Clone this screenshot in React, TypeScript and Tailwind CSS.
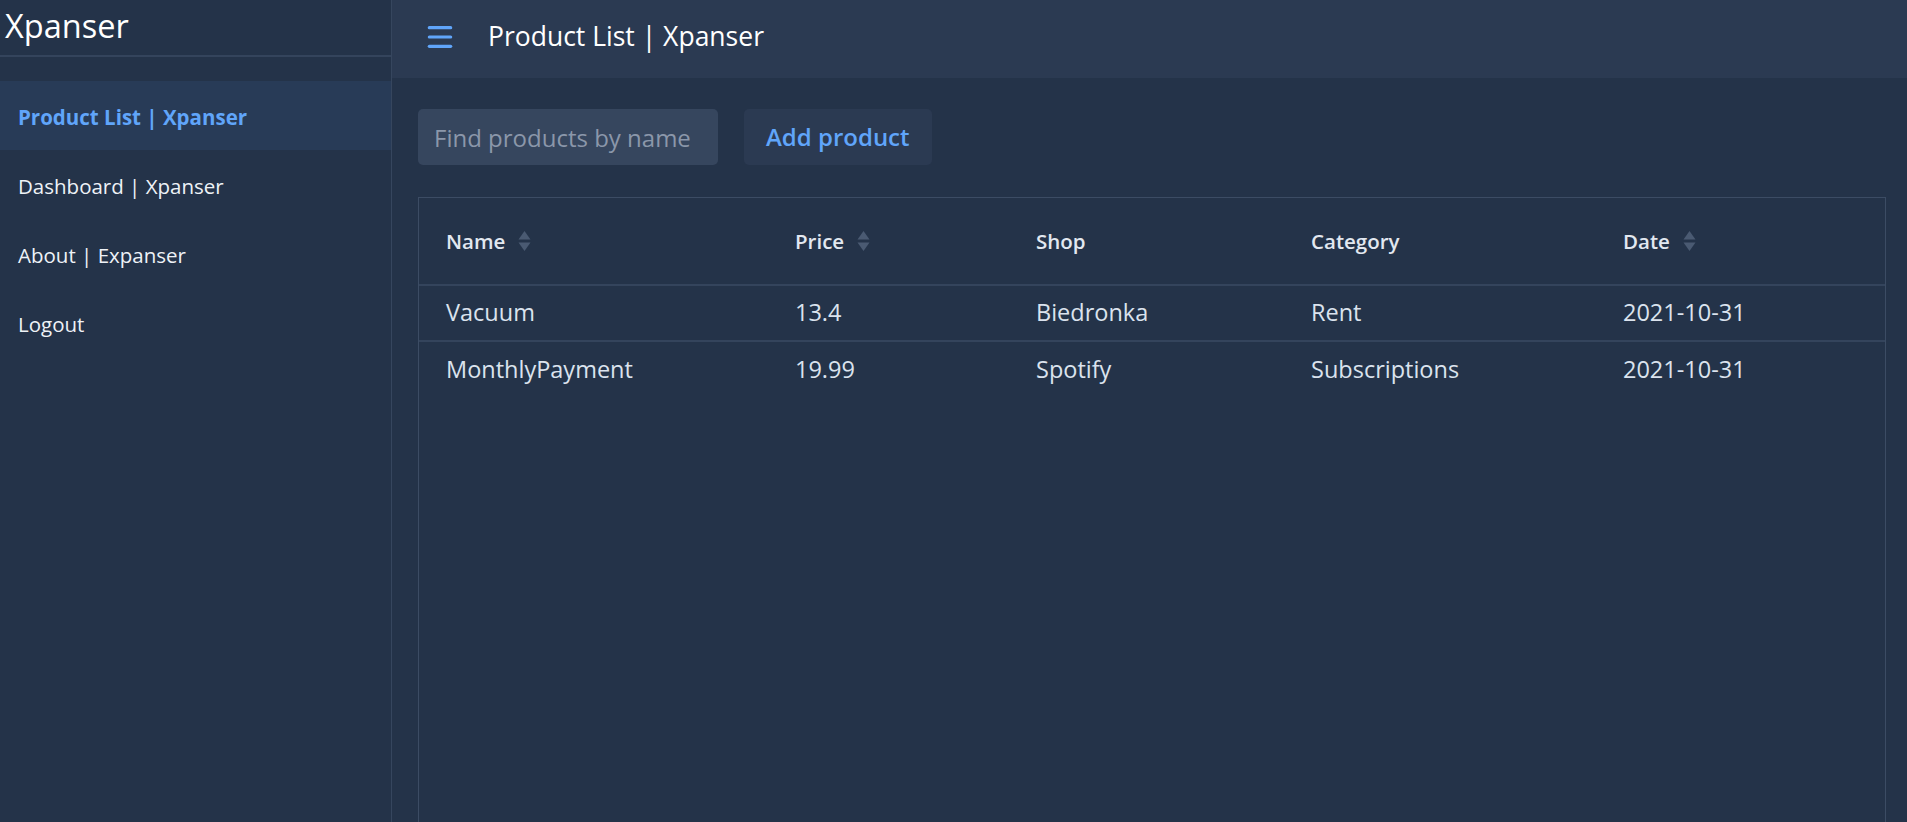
import { Menu } from 'lucide-react';

const rows = [
    { name: 'Vacuum', price: '13.4', shop: 'Biedronka', category: 'Rent', date: '2021-10-31' },
    { name: 'MonthlyPayment', price: '19.99', shop: 'Spotify', category: 'Subscriptions', date: '2021-10-31' },
];

const SortIcon = () => (
    <svg width="15" height="22" viewBox="0 0 15 22" className="ml-3 shrink-0">
        <path d="M7.5 1 L13.5 9.5 H1.5 Z" fill="#4a5a72" />
        <path d="M7.5 21 L13.5 12.5 H1.5 Z" fill="#4a5a72" />
    </svg>
);

const navItems = ['Product List | Xpanser', 'Dashboard | Xpanser', 'About | Expanser', 'Logout'];

export default function App() {
    return (
        <div className="flex h-[822px] w-full overflow-hidden bg-[#243349] text-[#e2e8f0]" style={{ fontFamily: '"Open Sans", "Noto Sans", sans-serif' }}>
            <aside className="w-[392px] shrink-0 border-r border-[#36465e] flex flex-col">
                <div className="h-[57px] border-b-2 border-[#34445c] pl-[5px] flex items-start">
                    <span className="text-[32.5px] leading-[52px] text-white">Xpanser</span>
                </div>
                <nav className="pt-[24px] flex flex-col">
                    {navItems.map((item, i) => (
                        <div
                            key={item}
                            className={
                                'h-[69px] flex items-center pl-[18px] pt-[3px] text-[20.5px] ' +
                                (i === 0 ? 'bg-[#283b57] text-[#60a5fa] font-bold' : 'text-[#eef2f7] font-medium')
                            }
                        >
                            {item}
                        </div>
                    ))}
                </nav>
            </aside>
            <main className="flex-1 flex flex-col min-w-0">
                <header className="h-[78px] shrink-0 bg-[#2b3a52] flex items-center pl-[32px] pb-[5px]">
                    <Menu className="w-[32px] h-[32px] text-[#60a5fa]" strokeWidth={2.4} />
                    <h1 className="ml-[32px] text-[26.5px] font-medium text-white">Product List | Xpanser</h1>
                </header>
                <div className="flex-1 flex flex-col pl-[26px] pr-[21px] pt-[31px]">
                    <div className="flex items-center gap-[26px]">
                        <input
                            placeholder="Find products by name"
                            className="w-[300px] h-[56px] rounded-[5px] bg-[#36465e] px-[16px] text-[24px] text-white placeholder:text-[#8b97aa] outline-none"
                        />
                        <button className="h-[56px] px-[22px] rounded-[5px] bg-[#2b3a52] text-[24px] font-semibold text-[#60a5fa]">
                            Add product
                        </button>
                    </div>
                    <div className="mt-[32px] flex-1 border border-[#3c4c64] border-b-0">
                        <table className="w-full table-fixed border-collapse text-left">
                            <colgroup>
                                <col className="w-[376px]" />
                                <col className="w-[241px]" />
                                <col className="w-[275px]" />
                                <col className="w-[312px]" />
                                <col />
                            </colgroup>
                            <thead>
                                <tr className="h-[87px] border-b-2 border-[#34445c]">
                                    <th className="pl-[27px] text-[20.5px] font-semibold">
                                        <div className="flex items-center">Name<SortIcon /></div>
                                    </th>
                                    <th className="text-[20.5px] font-semibold">
                                        <div className="flex items-center">Price<SortIcon /></div>
                                    </th>
                                    <th className="text-[20.5px] font-semibold">Shop</th>
                                    <th className="text-[20.5px] font-semibold">Category</th>
                                    <th className="text-[20.5px] font-semibold">
                                        <div className="flex items-center">Date<SortIcon /></div>
                                    </th>
                                </tr>
                            </thead>
                            <tbody>
                                {rows.map((r, i) => (
                                    <tr key={r.name} className={'h-[56px] text-[23.5px] text-[#dbe3ee] ' + (i === 0 ? 'border-b-2 border-[#34445c]' : '')}>
                                        <td className="pl-[27px]">{r.name}</td>
                                        <td>{r.price}</td>
                                        <td>{r.shop}</td>
                                        <td>{r.category}</td>
                                        <td>{r.date}</td>
                                    </tr>
                                ))}
                            </tbody>
                        </table>
                    </div>
                </div>
            </main>
        </div>
    );
}
